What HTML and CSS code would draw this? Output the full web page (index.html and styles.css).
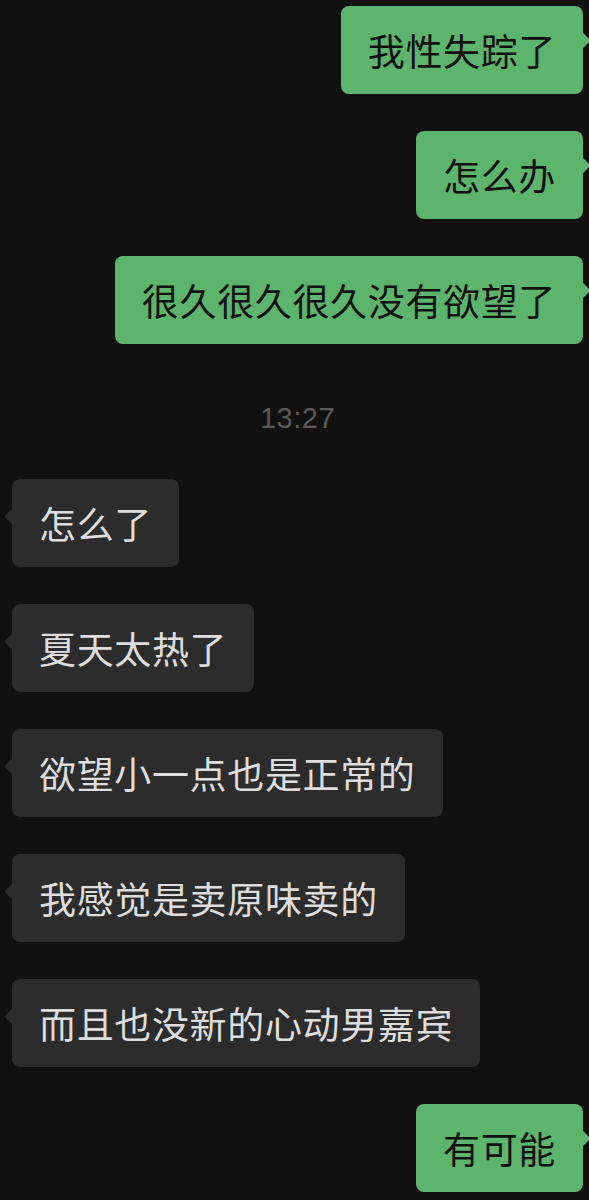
FILE: index.html
```html
<!DOCTYPE html>
<html lang="zh">
<head>
<meta charset="utf-8">
<link rel="stylesheet" href="styles.css">
</head>
<body>
<div class="chat">
  <div class="row right"><div class="bubble green">我性失踪了</div></div>
  <div class="row right"><div class="bubble green">怎么办</div></div>
  <div class="row right"><div class="bubble green">很久很久很久没有欲望了</div></div>
  <div class="time">13:27</div>
  <div class="row left"><div class="bubble dark">怎么了</div></div>
  <div class="row left"><div class="bubble dark">夏天太热了</div></div>
  <div class="row left"><div class="bubble dark">欲望小一点也是正常的</div></div>
  <div class="row left"><div class="bubble dark">我感觉是卖原味卖的</div></div>
  <div class="row left"><div class="bubble dark">而且也没新的心动男嘉宾</div></div>
  <div class="row right"><div class="bubble green">有可能</div></div>
</div>
</body>
</html>
```
FILE: styles.css
```css
html, body {
  margin: 0;
  padding: 0;
  background: #111111;
}
body {
  width: 589px;
  height: 1200px;
  overflow: hidden;
}
.chat {
  display: flex;
  flex-direction: column;
  gap: 37px;
  padding: 6px 6px 0 12px;
  font-family: "Noto Sans CJK SC", "Noto Sans", sans-serif;
}
.row {
  display: flex;
}
.row.right {
  justify-content: flex-end;
}
.row.left {
  justify-content: flex-start;
}
.bubble {
  position: relative;
  height: 88px;
  line-height: 88px;
  padding: 0 27px;
  font-size: 37px;
  letter-spacing: 0.65px;
  border-radius: 8px;
  white-space: nowrap;
}
.bubble::after {
  content: "";
  position: absolute;
  top: 28px;
  width: 13px;
  height: 13px;
  border-radius: 2px;
  transform: rotate(45deg);
}
.green {
  background: #5db46d;
  color: #111111;
}
.green::after {
  right: -5px;
  background: #5db46d;
}
.dark {
  background: #2c2c2c;
  color: #dedede;
}
.dark::after {
  left: -5px;
  top: 31px;
  background: #2c2c2c;
}
.time {
  margin: 17px 0 4px;
  height: 40px;
  line-height: 40px;
  text-align: center;
  font-family: "Liberation Sans", Arial, sans-serif;
  font-size: 29px;
  letter-spacing: 0.5px;
  color: #5a5a5a;
}
```
